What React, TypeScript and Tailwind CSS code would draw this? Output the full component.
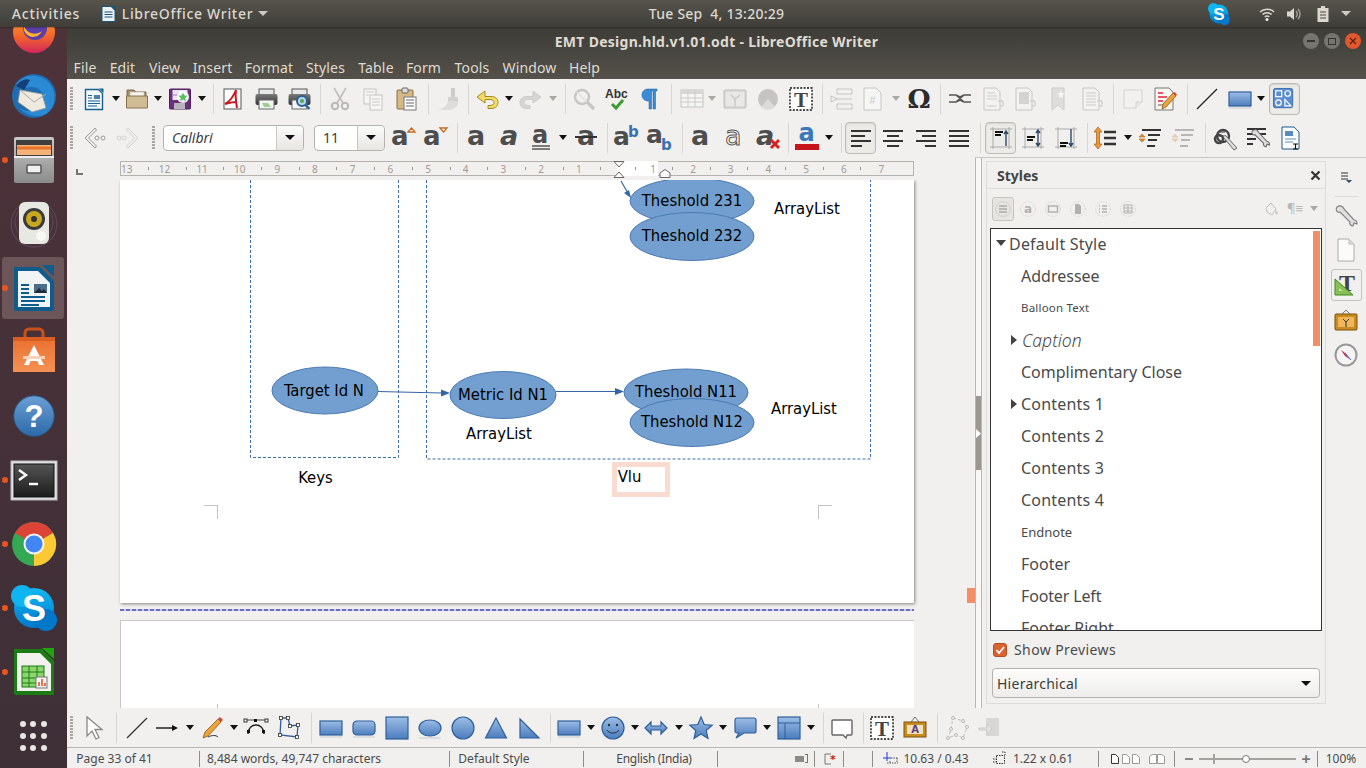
import React from "react";

type SP = { w?: number; h?: number; vb?: string; children?: React.ReactNode; className?: string };
const S = ({ w = 24, h = 24, vb = "0 0 24 24", children, className }: SP) => (
  <svg width={w} height={h} viewBox={vb} className={"overflow-visible " + (className || "")}>{children}</svg>
);

type Item = { x: number; n: React.ReactNode; w: number };
const it = (x: number, n: React.ReactNode, w = 28): Item => ({ x, n, w });
const tx = (left: number, width: number, n: React.ReactNode): Item => ({ x: left + width / 2, n, w: width });

function Bar({ items, origin = 67, className }: { items: Item[]; origin?: number; className?: string }) {
  let c = origin;
  return (
    <div className={"flex items-center " + (className || "")}>
      {items.map((i, k) => {
        const l = i.x - i.w / 2;
        const m = l - c;
        c = l + i.w;
        return (
          <div key={k} style={{ marginLeft: m, width: i.w }} className="shrink-0 flex items-center justify-center whitespace-pre">
            {i.n}
          </div>
        );
      })}
    </div>
  );
}

const Dd = ({ off }: { off?: boolean }) => (
  <S w={8} h={5} vb="0 0 8 5"><path d="M0 0h8L4 5z" fill={off ? "#aaa8a3" : "#111"} /></S>
);
const Sep = () => <div className="w-px h-[30px] bg-[#d8d6d2]" />;
const Grip = () => <div className="w-[3px] h-[24px] bg-[repeating-linear-gradient(#a8a6a1_0_2px,transparent_2px_3px)]" />;

const Defs = () => (
  <svg width="0" height="0" className="absolute">
    <defs>
      <linearGradient id="bl" x1="0" y1="0" x2="0" y2="1"><stop offset="0" stopColor="#9dbde6" /><stop offset="1" stopColor="#4c7dbd" /></linearGradient>
      <linearGradient id="gy" x1="0" y1="0" x2="0" y2="1"><stop offset="0" stopColor="#7b7b7b" /><stop offset="1" stopColor="#333" /></linearGradient>
      <linearGradient id="ff" x1="0" y1="0" x2="0" y2="1"><stop offset="0" stopColor="#ffb32c" /><stop offset="0.6" stopColor="#f4662a" /><stop offset="1" stopColor="#d2265f" /></linearGradient>
      <linearGradient id="bag" x1="0" y1="0" x2="0" y2="1"><stop offset="0" stopColor="#e96f2e" /><stop offset="1" stopColor="#f49155" /></linearGradient>
      <linearGradient id="sky" x1="0" y1="0" x2="0" y2="1"><stop offset="0" stopColor="#12b8f3" /><stop offset="1" stopColor="#0078ca" /></linearGradient>
      <linearGradient id="hp" x1="0" y1="0" x2="0" y2="1"><stop offset="0" stopColor="#6a9fd4" /><stop offset="1" stopColor="#2d6aa8" /></linearGradient>
      <linearGradient id="cab" x1="0" y1="0" x2="0" y2="1"><stop offset="0" stopColor="#c9c9c9" /><stop offset="1" stopColor="#8b8b8b" /></linearGradient>
      <linearGradient id="term" x1="0" y1="0" x2="0" y2="1"><stop offset="0" stopColor="#555" /><stop offset="1" stopColor="#1b1b1b" /></linearGradient>
    </defs>
  </svg>
);

/* ---------- toolbar icons ---------- */
const WriterDoc = () => (
  <S>
    <path d="M3.5 2.5h13l4 4v16h-17z" fill="#f5f8fb" stroke="#18608f" strokeWidth="1.4" />
    <path d="M17 1.5h4.5V6z" fill="#18608f" />
    <rect x="12" y="8" width="6" height="4" fill="#4f7fae" />
    <path d="M6 8.5h4M6 11h4M6 14h12M6 16.5h12M6 19h9" stroke="#18608f" strokeWidth="1.2" />
  </S>
);
const Open = () => (
  <S>
    <path d="M2 3h7l2 2h10v5H2z" fill="#a8946c" stroke="#7f6b48" />
    <rect x="5" y="5" width="14" height="7" fill="#f7f5ee" stroke="#b8b2a2" strokeWidth=".6" />
    <path d="M1.5 9h21v12h-21z" fill="#cfbb94" stroke="#8a7450" />
  </S>
);
const Save = () => (
  <S>
    <rect x="1.5" y="2" width="21" height="20" rx="1" fill="#6b2f7e" stroke="#4d1f5c" />
    <rect x="4.5" y="3" width="15" height="10" fill="#e8e6ee" />
    <path d="M4 8h15" stroke="#a07ab0" />
    <rect x="6" y="16" width="11" height="6" fill="#b9b5bd" />
    <circle cx="15" cy="10" r="6" fill="#fff" opacity=".9" />
    <path d="M15 5.5l1.4 3 3.2.3-2.4 2.1.8 3.2-3-1.7-3 1.7.8-3.2-2.4-2.1 3.2-.3z" fill="#55c05a" />
  </S>
);
const Pdf = () => (
  <S>
    <rect x="3" y="2" width="17" height="20" fill="#fff" stroke="#555" />
    <path d="M15 3c-2 5-5 11-11 14 4-1 7-2 11-2M15 3c-1 6 0 12 1 18" fill="none" stroke="#c8191c" strokeWidth="2" />
  </S>
);
const Printer = ({ mag }: { mag?: boolean }) => (
  <S>
    <rect x="5" y="2" width="15" height="6" fill="#e8e8e8" stroke="#555" />
    <rect x="1.5" y="7" width="22" height="11" rx="2" fill="url(#gy)" />
    <rect x="5" y="13" width="15" height="9" fill="#f4f4f4" stroke="#666" />
    {!mag && <path d="M8 16h6l3 4H10z" fill="#9ccf8f" />}
    {mag && <><circle cx="15" cy="14" r="5" fill="#b9d5ea" stroke="#2c5f93" strokeWidth="2" /><path d="M18.5 18l4 4" stroke="#2c5f93" strokeWidth="2.4" /><circle cx="15" cy="14" r="2" fill="#5aa060" /></>}
  </S>
);
const Cut = () => (
  <S className="opacity-40">
    <path d="M6 1l9 15M18 1L9 16" stroke="#777" strokeWidth="1.6" />
    <circle cx="7" cy="19" r="3.2" fill="none" stroke="#666" strokeWidth="2" />
    <circle cx="17" cy="19" r="3.2" fill="none" stroke="#666" strokeWidth="2" />
  </S>
);
const Copy = () => (
  <S className="opacity-35">
    <rect x="3" y="2" width="12" height="15" fill="#fff" stroke="#777" />
    <rect x="9" y="8" width="12" height="15" fill="#fff" stroke="#777" />
    <path d="M5 5h8M5 8h3M11 12h8M11 15h8M11 18h8" stroke="#888" />
  </S>
);
const Paste = () => (
  <S>
    <rect x="3" y="3" width="16" height="19" rx="1" fill="#d6b887" stroke="#8a6f42" />
    <rect x="8" y="1" width="6" height="5" rx="1" fill="#ddd" stroke="#666" />
    <rect x="10" y="10" width="12" height="13" fill="#fff" stroke="#777" />
    <path d="M12 13h8M12 16h8M12 19h8" stroke="#666" />
  </S>
);
const Brush = () => (
  <S className="opacity-35">
    <rect x="15" y="1" width="4" height="9" rx="1" fill="#888" />
    <path d="M12 10h10v4H12z" fill="#999" />
    <path d="M12 14h10c1 4-2 8-9 9-3 0-9 0-11-1 5 0 9-3 10-8z" fill="#bbb" />
  </S>
);
const Undo = ({ off }: { off?: boolean }) => (
  <S className={off ? "opacity-30 -scale-x-100" : ""}>
    <path d="M10 4L2 10l8 6v-3.5h5c3 0 4 1.5 4 3s-1 3-4 3h-2v3h3c5 0 7-3 7-6s-2-6-7-6h-6z" fill={off ? "#999" : "#f4dc6b"} stroke={off ? "#777" : "#a38a1d"} strokeWidth="1" />
  </S>
);
const Find = () => (
  <S className="opacity-40">
    <circle cx="10" cy="10" r="7" fill="none" stroke="#888" strokeWidth="2.4" />
    <path d="M15 15l7 7" stroke="#888" strokeWidth="3.4" />
    <path d="M5 5l10 10" stroke="#ccc" strokeWidth="1.5" />
  </S>
);
const Spell = () => (
  <S w={26} h={26} vb="0 0 26 26">
    <text x="1" y="12" fontSize="12" fontWeight="700" fill="#333" fontFamily="Liberation Sans">Abc</text>
    <path d="M8 18l4 4 7-8" fill="none" stroke="#3f9c35" strokeWidth="3" />
  </S>
);
const Pilcrow = () => (
  <S>
    <path d="M19 2H10C6.500 2 4 4.500 4 8s2.500 6 6 6h1v8h2.500V4h1.500v18h2.500V4H19z" fill="#3b8ad6" stroke="#1a5c96" strokeWidth=".5" />
  </S>
);
const TableI = () => (
  <S className="opacity-35">
    <rect x="1" y="3" width="22" height="17" fill="#fff" stroke="#777" />
    <rect x="1" y="3" width="22" height="4" fill="#aaa" />
    <path d="M1 11h22M1 15h22M8 3v17M15 3v17" stroke="#888" />
  </S>
);
const Img = () => (
  <S className="opacity-40">
    <rect x="1" y="3" width="22" height="18" rx="1" fill="#bbb" stroke="#777" />
    <rect x="3" y="5" width="18" height="14" fill="#ddd" />
    <path d="M12 19v-7l-4-4M12 12l5-4" stroke="#888" strokeWidth="1.4" fill="none" />
  </S>
);
const Chart = () => (
  <S className="opacity-50">
    <circle cx="12" cy="12" r="10" fill="#999" />
    <path d="M12 12L5 20a10 10 0 0 0 14 0z" fill="#c8c8c8" />
  </S>
);
const TBox = ({ size = 24 }: { size?: number }) => (
  <S w={size} h={size}>
    <rect x="1" y="1" width="22" height="22" fill="#fff" stroke="#111" strokeWidth="1.4" strokeDasharray="2 1.4" />
    <text x="12" y="19.500" textAnchor="middle" fontSize="21" fontWeight="700" fill="#444" fontFamily="Liberation Serif">T</text>
  </S>
);
const Header1 = () => (
  <S className="opacity-35">
    <path d="M7 2h15v5H7zM7 17h15v5H7zM1 9l6 3-6 3zM7 12h15" fill="none" stroke="#777" />
  </S>
);
const Field = () => (
  <S className="opacity-40">
    <path d="M3 1h12l5 5v17H3z" fill="#fff" stroke="#888" />
    <text x="11.500" y="17" textAnchor="middle" fontSize="11" fill="#888" fontFamily="Liberation Sans">#</text>
  </S>
);
const Omega = () => (
  <span className="font-['DejaVu_Serif'] font-bold text-[26px] leading-none text-[#2b2b2b]">Ω</span>
);
const LinkI = () => (
  <S><path d="M1 8h7l4 2 4-2h7M1 15h7l4-2 4 2h7M8 8l8 7M16 8l-8 7" fill="none" stroke="#555" strokeWidth="1.6" /></S>
);
const Pg = ({ kind }: { kind: number }) => (
  <S className="opacity-40">
    <path d="M3 1h12l4 4v18H3z" fill="#f5f5f5" stroke="#888" />
    {kind === 0 && <path d="M6 6h8M6 9h10M6 12h10M6 19h10" stroke="#999" />}
    {kind === 1 && <rect x="6" y="5" width="10" height="12" fill="#aaa" />}
    {kind === 2 && <path d="M6 6h10M6 9h10M6 12h10M6 15h10M6 18h10" stroke="#999" />}
    <path d="M17 14h5v5h-3" fill="none" stroke="#888" />
  </S>
);
const Bookmark = () => (
  <S className="opacity-35"><path d="M6 1h12v22l-6-5-6 5z" fill="#bbb" stroke="#888" /><path d="M15 3l1 3 3 .3-2.300 2 .7 3-2.400-1.500-2.500 1.500.7-3L11 6.300 14 6z" fill="#fff" /></S>
);
const Note = () => (
  <S className="opacity-40"><path d="M3 3h18v12l-6 6H3z" fill="#f4f4f4" stroke="#aaa" /><path d="M15 21v-6h6" fill="#ddd" stroke="#aaa" /></S>
);
const Track = () => (
  <S>
    <path d="M2 1h14l4 4v18H2z" fill="#f7f5f0" stroke="#777" />
    <path d="M5 6h5M5 10h9M5 14h5" stroke="#d24" strokeWidth="1.4" />
    <path d="M5 18h5" stroke="#888" strokeWidth="1.4" />
    <path d="M9 22l1-5L20 6l3 3-10 11z" fill="#eda23c" stroke="#8a5a12" strokeWidth=".8" />
    <path d="M20 6l3 3 1-1.500-2.500-2.500z" fill="#d2453f" />
  </S>
);
const LineI = ({ c = "#222" }: { c?: string }) => <S><path d="M2 22L22 2" stroke={c} strokeWidth="1.2" /></S>;
const RectI = ({ shadow = true }: { shadow?: boolean }) => (
  <S>
    {shadow && <rect x="1" y="20" width="22" height="2" fill="#ddd" />}
    <rect x="1" y="5" width="22" height="14" fill="url(#bl)" stroke="#2f5f9b" strokeWidth="1.2" />
  </S>
);
const ShapesI = () => (
  <S w={22} h={22}>
    <rect x=".5" y=".5" width="21" height="21" rx="2" fill="#5b8ed0" stroke="#3a6aa8" />
    <rect x="3" y="3" width="6.500" height="6.500" fill="none" stroke="#fff" strokeWidth="1.300" />
    <circle cx="16" cy="6" r="3" fill="none" stroke="#fff" strokeWidth="1.300" />
    <circle cx="6" cy="16" r="3" fill="none" stroke="#fff" strokeWidth="1.300" />
    <path d="M13 19.500h6.500l-6.500-7z" fill="none" stroke="#fff" strokeWidth="1.300" />
  </S>
);
const Lines = ({ kind, c = "#333" }: { kind: "l" | "c" | "r" | "j"; c?: string }) => {
  const d = {
    l: "M2 5h20M2 10h14M2 15h20M2 20h11",
    c: "M2 5h20M6 10h12M2 15h20M6 20h12",
    r: "M2 5h20M8 10h14M2 15h20M11 20h11",
    j: "M2 5h20M2 10h20M2 15h20M2 20h20",
  }[kind];
  return <S><path d={d} stroke={c} strokeWidth="2.200" /></S>;
};
const VAlign = ({ k }: { k: 0 | 1 | 2 }) => {
  const y = [7, 12, 18][k];
  return (
    <S>
      <path d="M4 1v22M20 1v22M1 3h22M1 21h22" stroke="#aaa" strokeWidth="1" />
      <path d={`M6 ${y - 1}h8M6 ${y + 2}h6`} stroke="#111" strokeWidth="2" />
      <path d={k === 0 ? "M17 20V6M15 8l2-3 2 3" : k === 1 ? "M17 5v14M15 7l2-3 2 3M15 17l2 3 2-3" : "M17 3v17M15 17l2 3 2-3"} fill="none" stroke="#2c4a6b" strokeWidth="1.400" />
    </S>
  );
};
const LineSpace = () => (
  <S>
    <path d="M5 1l4 5H6.500v12H9l-4 5-4-5h2.500V6H1z" fill="#e9973f" stroke="#b06a1a" strokeWidth=".8" />
    <path d="M11 6h12M11 12h12M11 18h12" stroke="#333" strokeWidth="2.400" />
  </S>
);
const ParaSpace = ({ off }: { off?: boolean }) => (
  <S className={off ? "opacity-30" : ""}>
    <path d="M4 4h19M9 20h8M1 22h0" stroke="#333" strokeWidth="2.200" />
    <path d="M4 8l3 3H1zM4 16l3-3H1z" fill="#e0883a" stroke="#b06a1a" strokeWidth=".6" />
    <path d="M10 9h12M10 14h9" stroke="#333" strokeWidth="1.800" />
  </S>
);
const Wrench = ({ c = "#555" }: { c?: string }) => (
  <path d="M3 3c3-2 6-1 7 2l10 11c2 0 3 2 3 4l-3-1-1 3c-2 0-4-2-3-4L6 8C3 9 1 6 3 3z" fill="#ddd" stroke={c} strokeWidth="1.200" />
);
const FindRep = () => (
  <S>
    <path d="M4 6h7M4 10h7" stroke="#333" />
    <circle cx="9" cy="10" r="6" fill="none" stroke="#444" strokeWidth="2.400" />
    <circle cx="5" cy="13" r="4" fill="none" stroke="#444" strokeWidth="2.400" />
    <path d="M11 9l12 13-3 2-10-12" fill="#ddd" stroke="#666" />
  </S>
);
const ListWrench = () => (
  <S>
    <path d="M1 3h19M1 8h19M1 13h9M1 18h6" stroke="#333" strokeWidth="2.200" />
    <g transform="translate(4 2) scale(.85)"><Wrench c="#666" /></g>
  </S>
);
const PageEdit = () => (
  <S>
    <path d="M3 1h12l5 5v17H3z" fill="#fff" stroke="#1d5d8d" />
    <rect x="6" y="5" width="8" height="5" fill="#5a8ac0" />
    <path d="M6 13h11M6 16h8" stroke="#5a8ac0" />
    <path d="M14 18h5M16.500 18v5M14 23h5" stroke="#111" strokeWidth="1.200" />
  </S>
);
const A = ({ s = 27, c = "#4d4d4d", italic, x = 5, y = 20, extra, stroke }: { s?: number; c?: string; italic?: boolean; x?: number; y?: number; extra?: React.ReactNode; stroke?: boolean }) => (
  <S w={28} h={26} vb="0 0 28 26">
    <text x={x} y={y} fontSize={s} fontWeight={stroke ? "400" : "700"} fontStyle={italic ? "italic" : "normal"} fontFamily="DejaVu Sans" fill={stroke ? "#fff" : c} stroke={stroke ? "#555" : "none"} strokeWidth={stroke ? 1 : 0}>a</text>
    {extra}
  </S>
);
const PrevNav = ({ off }: { off?: boolean }) => (
  <S className={off ? "opacity-25" : "opacity-70"}>
    {off ? (
      <path d="M12 2l10 10-10 10-1.500-2 8-8-8-8z" fill="#eee" stroke="#777" />
    ) : (
      <path d="M12 2L2 12l10 10 1.500-2-8-8 8-8z" fill="#eee" stroke="#777" />
    )}
    <circle cx={off ? 3 : 14} cy="12" r="2" fill="none" stroke="#777" />
    <circle cx={off ? 8 : 20} cy="12" r="2" fill="none" stroke="#777" />
  </S>
);
const Active = ({ children }: { children: React.ReactNode }) => (
  <div className="w-[31px] h-[32px] shrink-0 flex items-center justify-center rounded-[4px] border border-[#bdbbb6] bg-[#ecebe8] shadow-[inset_0_1px_2px_rgba(0,0,0,0.1)]">{children}</div>
);
const Combo = ({ label, w, italic, tw }: { label: string; w: string; italic?: boolean; tw: string }) => (
  <div className={"h-[26px] rounded-[4px] border border-[#b4b2ad] bg-white flex items-stretch text-[14px] text-[#3c3c3c] shrink-0 " + w}>
    <div className={"flex-1 flex items-center pl-2 " + (italic ? "italic" : "")}>{label}</div>
    <div className={"border-l border-[#c9c7c2] bg-gradient-to-b from-[#fbfbfa] to-[#e7e6e3] rounded-r-[4px] flex items-center justify-center " + tw}>
      <S w={10} h={5} vb="0 0 10 5"><path d="M0 0h10L5 5z" fill="#111" /></S>
    </div>
  </div>
);

/* ---------- draw toolbar shapes ---------- */
const Sh = ({ children }: { children: React.ReactNode }) => <S>{children}</S>;
const blue = { fill: "url(#bl)", stroke: "#2f5f9b", strokeWidth: 1.2 };

const row1: Item[] = [
  it(71, <Grip />, 3), it(94, <WriterDoc />), it(116, <Dd />, 8), it(137, <Open />), it(158, <Dd />, 8),
  it(180, <Save />), it(202, <Dd />, 8), it(213, <Sep />, 1), it(233, <Pdf />), it(266, <Printer />), it(299, <Printer mag />),
  it(320, <Sep />, 1), it(340, <Cut />), it(373, <Copy />), it(406, <Paste />), it(428, <Sep />, 1), it(448, <Brush />),
  it(468, <Sep />, 1), it(487, <Undo />), it(509, <Dd />, 8), it(531, <Undo off />), it(553, <Dd off />, 8), it(565, <Sep />, 1),
  it(584, <Find />), it(617, <Spell />), it(650, <Pilcrow />), it(671, <Sep />, 1), it(692, <TableI />), it(712, <Dd off />, 8),
  it(735, <Img />), it(768, <Chart />), it(801, <TBox />), it(822, <Sep />, 1), it(842, <Header1 />), it(873, <Field />),
  it(896, <Dd off />, 8), it(919, <Omega />), it(940, <Sep />, 1), it(960, <LinkI />), it(993, <Pg kind={0} />), it(1025, <Pg kind={1} />),
  it(1058, <Bookmark />), it(1092, <Pg kind={2} />), it(1113, <Sep />, 1), it(1133, <Note />), it(1165, <Track />), it(1187, <Sep />, 1),
  it(1207, <LineI />), it(1240, <RectI />), it(1261, <Dd />, 8), it(1284, <Active><ShapesI /></Active>, 31),
];

const row2: Item[] = [
  it(71, <Grip />, 3), it(95, <PrevNav />), it(128, <PrevNav off />), it(153, <Grip />, 3),
  it(233.5, <Combo label="Calibri" italic w="w-[141px]" tw="w-[27px]" />, 141),
  it(349.5, <Combo label="11" w="w-[71px]" tw="w-[27px]" />, 71),
  it(402, <A x={3} s={26} extra={<path d="M20 7l3.500-4 3.500 4z" fill="#fff" stroke="#c66a1c" strokeWidth="1.300" />} />),
  it(434, <A x={3} s={26} extra={<path d="M20 3l3.500 4 3.500-4z" fill="#fff" stroke="#c66a1c" strokeWidth="1.300" />} />),
  it(457, <Sep />, 1),
  it(476, <A />), it(509, <A italic />),
  it(541, <A s={24} y={18} extra={<path d="M5 21h18M5 24h18" stroke="#555" strokeWidth="1.400" />} />), it(563, <Dd />, 8),
  it(586, <A extra={<path d="M3 12h22" stroke="#333" strokeWidth="2" />} />), it(607, <Sep />, 1),
  it(626, <A x={1} s={25} y={20} extra={<text x="16" y="12" fontSize="15" fontWeight="700" fontFamily="DejaVu Sans" fill="#3a6fb0">b</text>} />),
  it(659, <A x={1} s={25} y={18} extra={<text x="16" y="25" fontSize="15" fontWeight="700" fontFamily="DejaVu Sans" fill="#3a6fb0">b</text>} />),
  it(682, <Sep />, 1),
  it(700, <A />), it(734, <A stroke />),
  it(768, <A x={2} italic extra={<path d="M17 15l8 8M25 15l-8 8" stroke="#d8201f" strokeWidth="3" />} />),
  it(788, <Sep />, 1),
  it(807, <S w={24} h={26} vb="0 0 24 26"><text x="3.500" y="16" fontSize="24" fontWeight="700" fontFamily="DejaVu Sans" fill="#3a78bd">a</text><rect y="19" width="24" height="6" fill="#c7141a" /></S>, 24),
  it(829, <Dd />, 8), it(841, <Sep />, 1),
  it(860.5, <Active><Lines kind="l" /></Active>, 31), it(893, <Lines kind="c" />), it(926, <Lines kind="r" />), it(959, <Lines kind="j" />),
  it(980, <Sep />, 1),
  it(1000.5, <Active><VAlign k={0} /></Active>, 31), it(1033, <VAlign k={1} />), it(1066, <VAlign k={2} />),
  it(1087, <Sep />, 1), it(1105, <LineSpace />), it(1128, <Dd />, 8), it(1150, <ParaSpace />), it(1183, <ParaSpace off />), it(1205, <Sep />, 1),
  it(1226, <FindRep />), it(1258, <ListWrench />), it(1291, <PageEdit />),
];

const row3: Item[] = [
  it(71, <Grip />, 3),
  it(95, <S><path d="M4 1v19l5-5 4 8 3-1.500-4-8h7z" fill="#fff" stroke="#888" strokeWidth="1.300" /></S>),
  it(116, <Sep />, 1),
  it(137, <LineI c="#333" />),
  it(167, <S><path d="M1 12h17" stroke="#111" strokeWidth="1.400" /><path d="M17 9l6 3-6 3z" fill="#111" /></S>), it(190, <Dd />, 8),
  it(212, <S><path d="M3 22l2-6L18 3l3 3L8 20z" fill="#eda23c" stroke="#8a5a12" strokeWidth=".8" /><path d="M18 3l3 3 2-2-3-3z" fill="#d2453f" /><path d="M8 21c4-2 8-2 10 0" stroke="#333" fill="none" /></S>), it(234, <Dd />, 8),
  it(256, <S><path d="M4 18C4 6 20 6 20 18" fill="none" stroke="#222" strokeWidth="1.400" /><path d="M1 4h22" stroke="#444" /><rect x="0" y="3" width="3" height="3" fill="#fff" stroke="#333" /><rect x="21" y="3" width="3" height="3" fill="#fff" stroke="#333" /><rect x="10" y="3" width="3" height="3" fill="#111" /><rect x="3" y="14" width="3" height="3" fill="#111" /><rect x="18" y="14" width="3" height="3" fill="#111" /></S>),
  it(289, <S><path d="M4 2h7l2 8 8-1-1 12-17-2z" fill="none" stroke="#2f5f9b" strokeWidth="1.300" />{[[4, 2], [11, 2], [13, 10], [21, 9], [20, 21], [3, 19]].map(([x, y], i) => <rect key={i} x={x - 1.5} y={y - 1.5} width="3" height="3" fill="#fff" stroke="#333" strokeWidth=".8" />)}</S>),
  it(311, <Sep />, 1),
  it(331, <RectI />),
  it(364, <Sh><rect x="1" y="20" width="22" height="2" fill="#ddd" /><rect x="1" y="5" width="22" height="14" rx="4" {...blue} /></Sh>),
  it(397, <Sh><rect x="1" y="1" width="22" height="22" {...blue} /></Sh>),
  it(430, <Sh><rect x="1" y="21" width="22" height="2" fill="#ddd" /><ellipse cx="12" cy="12" rx="11" ry="8" {...blue} /></Sh>),
  it(463, <Sh><circle cx="12" cy="12" r="11" {...blue} /></Sh>),
  it(496, <Sh><path d="M12 2l10.500 20h-21z" {...blue} /></Sh>),
  it(529, <Sh><path d="M3 3l19 19H3z" {...blue} /></Sh>),
  it(550, <Sep />, 1),
  it(569, <RectI />), it(591, <Dd />, 8),
  it(613, <Sh><circle cx="12" cy="12" r="11" {...blue} /><circle cx="8" cy="9" r="1.200" fill="#234" /><circle cx="16" cy="9" r="1.200" fill="#234" /><path d="M6 14c2 4 10 4 12 0" fill="none" stroke="#234" /></Sh>), it(635, <Dd />, 8),
  it(656, <Sh><path d="M1 12l6-6v4h10V6l6 6-6 6v-4H7v4z" {...blue} /></Sh>), it(679, <Dd />, 8),
  it(701, <Sh><path d="M12 1l3.200 7.500 8 .7-6 5.300 1.800 8L12 18l-7 4.500 1.800-8-6-5.300 8-.7z" {...blue} /></Sh>), it(723, <Dd />, 8),
  it(745, <Sh><path d="M4 2h17a2 2 0 0 1 2 2v11a2 2 0 0 1-2 2H11l-8 5 3-5H4a2 2 0 0 1-2-2V4a2 2 0 0 1 2-2z" {...blue} /></Sh>), it(767, <Dd />, 8),
  it(789, <Sh><rect x="1" y="1" width="22" height="22" {...blue} /><path d="M1 7h22M8 7v16" stroke="#2f5f9b" /></Sh>), it(811, <Dd />, 8),
  it(823, <Sep />, 1),
  it(842, <S><path d="M3 4h18a1 1 0 0 1 1 1v13a1 1 0 0 1-1 1h-4l-1 3-3-3H3a1 1 0 0 1-1-1V5a1 1 0 0 1 1-1z" fill="#fff" stroke="#666" strokeWidth="1.400" /></S>),
  it(863, <Sep />, 1),
  it(882, <TBox />),
  it(915, <S><path d="M12 1l-4 5M12 1l4 5" stroke="#777" fill="none" /><rect x="1" y="6" width="22" height="15" fill="#c98a1e" stroke="#7a5210" /><rect x="4" y="9" width="16" height="9" fill="#f2e2bc" /><text x="12" y="17" textAnchor="middle" fontSize="10" fontWeight="700" fill="#5a3b8a" fontFamily="DejaVu Sans">A</text></S>),
  it(937, <Sep />, 1),
  it(957, <S className="opacity-40"><path d="M8 2l10 3 4 6-4 11-7-3-8 3 3-9z" fill="none" stroke="#777" strokeDasharray="3 2" />{[[8, 2], [18, 5], [22, 11], [18, 22], [11, 19], [3, 22], [6, 13]].map(([x, y], i) => <circle key={i} cx={x} cy={y} r="1.500" fill="#fff" stroke="#666" />)}</S>),
  it(990, <S className="opacity-35"><path d="M8 2h13v18H8z" fill="#aaa" /><path d="M1 12h8V8l5 5-5 5v-4H1z" fill="#ccc" stroke="#888" /></S>),
];

/* ---------- dock ---------- */
const Dock48 = ({ children, s = 48 }: { children: React.ReactNode; s?: number }) => <S w={s} h={s} vb="0 0 48 48">{children}</S>;
const dock: { n: React.ReactNode; dot?: boolean; active?: boolean }[] = [
  { n: <Dock48><circle cx="24" cy="24" r="21" fill="url(#ff)" /><circle cx="25" cy="20" r="12" fill="#5b3ea8" /><path d="M14 18c3 8 12 10 18 5-3 6-9 7-13 5-4-2-6-6-5-10z" fill="#ffb32c" /></Dock48> },
  { n: <Dock48><circle cx="24" cy="24" r="22" fill="#1f6cb0" /><path d="M6 12C14 0 38 0 44 20c2 10-2 18-8 22-8 4-20 2-26-6 10 6 22 4 24-8 1-8-8-16-18-12z" fill="#2a8ad4" /><path d="M10 18l22 4 4 14-14 4L8 30z" fill="#efeae0" stroke="#999" strokeWidth=".8" /><path d="M10 18l14 12 12-8" fill="none" stroke="#aaa" /><path d="M6 14c4-6 10-8 14-6l-6 10z" fill="#123f7a" /></Dock48> },
  { n: <Dock48><rect x="4" y="1" width="40" height="46" rx="2" fill="url(#cab)" /><rect x="6" y="4" width="36" height="18" fill="#3e3e3e" /><rect x="7" y="9" width="34" height="10" fill="#f5b37a" /><path d="M7 12h34" stroke="#e8742c" strokeWidth="3" /><path d="M4 20h40v2H4z" fill="#eee" /><rect x="17" y="29" width="14" height="8" rx="1" fill="#f0f0f0" stroke="#555" strokeWidth="1.500" /></Dock48>, dot: true },
  { n: <Dock48><circle cx="24" cy="24" r="23" fill="none" stroke="#6f5d75" strokeWidth="1" opacity=".6" /><circle cx="24" cy="22" r="19" fill="none" stroke="#6f5d75" strokeWidth="1" opacity=".5" /><rect x="9" y="2" width="30" height="42" rx="6" fill="#e8e8e2" /><circle cx="24" cy="19" r="11" fill="#3a3a3a" /><circle cx="24" cy="19" r="8" fill="#c9a81f" /><circle cx="24" cy="19" r="3" fill="#333" /><circle cx="31" cy="36" r="5" fill="#f8f8f4" /></Dock48> },
  { n: <Dock48><path d="M4 3h26l14 14v28a2 2 0 0 1-2 2H6a2 2 0 0 1-2-2z" fill="#0e5b8c" /><path d="M8 7h20l12 12v24H8z" fill="#f1f4f6" /><path d="M32 1h12v12z" fill="#0e5b8c" /><rect x="24" y="20" width="13" height="9" fill="#4c6c88" /><path d="M24 29l5-5 3 3 2-2 3 4z" fill="#1e2b36" /><path d="M11 21h8M11 25h8M11 29h8M11 33h24M11 37h24M11 41h18" stroke="#0e5b8c" strokeWidth="2" /></Dock48>, dot: true, active: true },
  { n: <Dock48><path d="M3 9h42v35H3z" fill="url(#bag)" /><path d="M3 9h42v4H3z" fill="#d85f1f" /><path d="M15 9V5a4 4 0 0 1 4-4h10a4 4 0 0 1 4 4v4" fill="none" stroke="#c9501a" strokeWidth="3" /><path d="M24 17l10 20h-5l-1.500-4h-7L19 37h-5z" fill="#fff" /><rect x="13" y="28" width="22" height="3" fill="#f9d2b8" /></Dock48> },
  { n: <Dock48 s={44}><circle cx="24" cy="24" r="22" fill="url(#hp)" stroke="#275d96" /><text x="24" y="36" textAnchor="middle" fontSize="34" fontWeight="700" fill="#fff" fontFamily="Liberation Sans">?</text></Dock48> },
  { n: <Dock48 s={48}><rect x="1" y="5" width="46" height="39" fill="#e0e0e0" stroke="#bbb" /><rect x="4" y="8" width="40" height="33" fill="url(#term)" stroke="#111" /><path d="M9 14l7 5-7 5" fill="none" stroke="#fff" strokeWidth="2.400" /><path d="M19 28h9" stroke="#fff" strokeWidth="2.400" /></Dock48>, dot: true },
  { n: <Dock48><circle cx="24" cy="24" r="22" fill="#34a853" /><path d="M4.900 13A22 22 0 0 1 43.100 13L24 24z" fill="#db4437" /><path d="M43.100 13A22 22 0 0 1 24 46L24 24z" fill="#fcc934" /><circle cx="24" cy="24" r="10.500" fill="#f1f3f4" /><circle cx="24" cy="24" r="8.500" fill="#4285f4" /></Dock48>, dot: true },
  { n: <Dock48><circle cx="24" cy="24" r="20" fill="url(#sky)" /><circle cx="12" cy="12" r="11" fill="#10b4f0" /><circle cx="36" cy="36" r="11" fill="#0078ca" /><text x="24" y="37" textAnchor="middle" fontSize="36" fontWeight="700" fill="#fff" fontFamily="Liberation Sans">S</text></Dock48>, dot: true },
  { n: <Dock48><path d="M4 1h28l12 12v32a2 2 0 0 1-2 2H6a2 2 0 0 1-2-2z" fill="#1a7c12" /><path d="M7 5h23l11 11v27H7z" fill="#f1f1ee" /><path d="M32 0h12v11z" fill="#1fa30f" /><rect x="12" y="18" width="22" height="21" fill="#8dd56f" stroke="#1a7c12" /><path d="M12 24h22M12 30h22M12 35h22M19 18v21M27 18v21" stroke="#1a7c12" /><rect x="26" y="29" width="11" height="11" fill="#f4f4f4" stroke="#777" /><path d="M29 38v-4M32 38v-7M35 38v-3" stroke="#e0562b" strokeWidth="1.600" /></Dock48>, dot: true },
];

const Dock = () => (
  <div className="w-[67px] shrink-0 h-full overflow-hidden bg-gradient-to-b from-[#4d3239] to-[#3e2f37] z-0">
    <div className="-mt-[26px] flex flex-col">
      {dock.map((d, i) => (
        <div key={i} className="relative h-[64px] flex items-center justify-center">
          {d.active && <div className="absolute left-[2px] top-[0px] w-[62px] h-[62px] rounded-[3px] bg-[#6c5659]" />}
          {d.dot && <div className="absolute left-[2px] top-[28px] w-[6px] h-[6px] rounded-full bg-[#e9541f]" />}
          <div className="relative -top-[1px]">{d.n}</div>
        </div>
      ))}
      <div className="h-[64px] grid grid-cols-3 gap-y-[6px] justify-items-center content-center px-[18px] pb-[2px]">
        {Array.from({ length: 9 }).map((_, i) => <div key={i} className="w-[6px] h-[6px] rounded-full bg-[#e9e7e4]" />)}
      </div>
    </div>
  </div>
);

/* ---------- top ---------- */
const TopBar = () => (
  <div className="h-[27px] shrink-0 bg-gradient-to-b from-[#57544d] to-[#3f3e39] text-[#dcd8cf] text-[14px] font-medium flex items-center relative z-10 shadow-[0_1px_1px_rgba(0,0,0,0.2)]">
    <Bar origin={0} className="w-full h-full" items={[
      tx(12, 68, <span className="tracking-[0.8px]">Activities</span>),
      it(108, <S w={15} h={16} vb="0 0 15 16"><path d="M1 .5h9l4 4v11H1z" fill="#eef2f5" stroke="#14567f" /><path d="M10 0h5v5z" fill="#14567f" /><path d="M3.500 6h8M3.500 8.500h8M3.500 11h8" stroke="#14567f" /></S>, 15),
      tx(122, 131, <span className="tracking-[0.7px]">LibreOffice Writer</span>),
      it(263, <S w={10} h={5} vb="0 0 10 5"><path d="M0 0h10L5 5z" fill="#cfcbc2" /></S>, 10),
      tx(648, 137, <span className="tracking-[0.25px]">Tue Sep  4, 13:20:29</span>),
      it(1218.5, <S w={24} h={24}><circle cx="12" cy="12" r="9.500" fill="url(#sky)" /><circle cx="6.500" cy="6.500" r="5.500" fill="#10b4f0" /><circle cx="17.500" cy="17.500" r="5.500" fill="#0078ca" /><text x="12" y="18" textAnchor="middle" fontSize="17" fontWeight="700" fill="#fff" fontFamily="Liberation Sans">S</text></S>, 24),
      it(1267, <S w={16} h={16} vb="0 0 16 16"><path d="M1 6a10 10 0 0 1 14 0M3.500 8.500a6.500 6.500 0 0 1 9 0M5.800 11a3 3 0 0 1 4.400 0" fill="none" stroke="#dcd8cf" strokeWidth="1.500" /><circle cx="8" cy="13.500" r="1.500" fill="#f2f0ea" /></S>, 16),
      it(1294, <S w={16} h={16} vb="0 0 16 16"><path d="M1 5.500h3L8 2v12l-4-3.500H1z" fill="#dcd8cf" /><path d="M10 5a4 4 0 0 1 0 6M12 3a7 7 0 0 1 0 10" fill="none" stroke="#a8a59d" strokeWidth="1.300" /></S>, 16),
      it(1323, <S w={12} h={16} vb="0 0 12 16"><path d="M4 0h4v2h3.500v14H.5V2H4z" fill="#dcd8cf" /><path d="M3 6h6M3 9h6M3 12h6" stroke="#4a4842" strokeWidth="1.200" /></S>, 12),
      it(1346, <S w={10} h={5} vb="0 0 10 5"><path d="M0 0h10L5 5z" fill="#cfcbc2" /></S>, 10),
    ]} />
  </div>
);

const WinBtn = ({ c, children }: { c: string; children: React.ReactNode }) => (
  <div className={"w-[16px] h-[16px] rounded-full flex items-center justify-center " + c}>{children}</div>
);

const TitleArea = () => (
  <div className="h-[52px] shrink-0 bg-gradient-to-b from-[#3d3c37] to-[#54514a] flex flex-col text-[#dfdbd2]">
    <div className="h-[30px] shrink-0 flex items-center relative pb-[2px]">
      <div className="w-full text-center font-bold text-[14px] tracking-[0.28px]">EMT Design.hld.v1.01.odt - LibreOffice Writer</div>
      <div className="absolute right-[5px] top-[6px] flex gap-[5px] items-center">
        <WinBtn c="bg-[#76746e]"><div className="w-[8px] h-[2px] bg-[#35342f]" /></WinBtn>
        <WinBtn c="bg-[#76746e]"><div className="w-[8px] h-[7px] border border-[#35342f]" /></WinBtn>
        <WinBtn c="bg-[#e2572b]"><S w={8} h={8} vb="0 0 8 8"><path d="M1 1l6 6M7 1L1 7" stroke="#5a2210" strokeWidth="1.300" /></S></WinBtn>
      </div>
    </div>
    <Bar className="h-[20px] text-[14px] tracking-[0.15px]" items={[
      tx(73, 24, "File"), tx(109, 27, "Edit"), tx(148, 33, "View"), tx(193, 39, "Insert"), tx(244, 50, "Format"),
      tx(306, 39, "Styles"), tx(358, 36, "Table"), tx(406, 35, "Form"), tx(454, 36, "Tools"), tx(502, 55, "Window"), tx(569, 31, "Help"),
    ]} />
  </div>
);

/* ---------- ruler ---------- */
const leftNums = [13, 12, 11, 10, 9, 8, 7, 6, 5, 4, 3, 2, 1];
const rightNums = [2, 3, 4, 5, 6, 7];
const Ruler = () => (
  <div className="h-[23px] shrink-0 flex items-center">
    <div className="w-[53px] shrink-0 pl-[9px] pt-[6px]">
      <div className="w-[7px] h-[6px] border-l-2 border-b-2 border-[#77756f]" />
    </div>
    <div className="w-[794px] shrink-0 h-[15px] border border-[#b5b3ae] flex items-center text-[10px] leading-none text-[#a39a92] relative">
      <div className="w-[496px] shrink-0 flex justify-around pr-[6px]">
        {leftNums.map((n) => (
          <div key={n} className="flex items-center gap-[16px] w-[37.700px]">
            <span className="w-[11px] text-center">{n}</span>
            <span className="w-px h-[3px] bg-[#9a9894]" />
          </div>
        ))}
      </div>
      <div className="w-[41px] shrink-0 h-[15px] bg-white flex items-center justify-end pr-[2px]">
        <span className="w-px h-[3px] bg-[#9a9894] mr-[14px]" /><span>1</span>
      </div>
      <div className="flex-1 flex pl-[5px]">
        {rightNums.map((n) => (
          <div key={n} className="flex items-center gap-[16px] w-[37.700px] pl-[9px]">
            <span className="w-px h-[3px] bg-[#9a9894]" />
            <span className="w-[8px] text-center">{n}</span>
          </div>
        ))}
      </div>
      <div className="absolute left-[492px] -top-[1px] w-[12px] h-[16px]">
        <S w={12} h={17} vb="0 0 12 17"><path d="M1 .5h10L6 6zM1 16.500h10L6 11z" fill="#fff" stroke="#666" /></S>
      </div>
      <div className="absolute left-[538px] top-[7px] w-[12px] h-[9px]">
        <S w={12} h={9} vb="0 0 12 9"><path d="M1 8.500V4l5-3.500L11 4v4.500z" fill="#fff" stroke="#666" /></S>
      </div>
    </div>
  </div>
);

/* ---------- document ---------- */
const Diagram = () => (
  <svg width="794" height="423" viewBox="120 180 794 423" className="absolute left-0 top-0 font-['DejaVu_Sans_Condensed','DejaVu_Sans',sans-serif]">
    <path d="M250.500 175V457.500H398.500V175" fill="none" stroke="#3a6ea8" strokeWidth="1" strokeDasharray="3 2" />
    <path d="M426.500 175V459H870.500V175" fill="none" stroke="#3a6ea8" strokeWidth="1" strokeDasharray="3 2" />
    <ellipse cx="692" cy="201" rx="62" ry="23" fill="#729fcf" stroke="#4b7ab2" />
    <ellipse cx="692" cy="236.500" rx="62" ry="24" fill="#729fcf" stroke="#4b7ab2" />
    <path d="M621 181l8 14" stroke="#3465a4" strokeWidth="1.200" />
    <path d="M631 198l-7-5 5-3z" fill="#3465a4" />
    <ellipse cx="325" cy="390.500" rx="53" ry="23.500" fill="#729fcf" stroke="#4b7ab2" />
    <ellipse cx="503" cy="395" rx="53" ry="23.500" fill="#729fcf" stroke="#4b7ab2" />
    <ellipse cx="686" cy="392.500" rx="62" ry="23.500" fill="#729fcf" stroke="#4b7ab2" />
    <ellipse cx="692" cy="422.500" rx="62" ry="24" fill="#729fcf" stroke="#4b7ab2" />
    <path d="M378 391.500l64 1.500" stroke="#3465a4" strokeWidth="1.200" />
    <path d="M450 393l-9-3.500v7z" fill="#3465a4" />
    <path d="M556 391.500h60" stroke="#3465a4" strokeWidth="1.200" />
    <path d="M624 391.500l-9-3.500v7z" fill="#3465a4" />
    <g fontSize="16.500" fill="#000" textAnchor="middle" className="[font-stretch:condensed]">
      <text x="692" y="206">Theshold 231</text>
      <text x="692" y="241">Theshold 232</text>
      <text x="807" y="214">ArrayList</text>
      <text x="324" y="396">Target Id N</text>
      <text x="503" y="400">Metric Id N1</text>
      <text x="686" y="397">Theshold N11</text>
      <text x="692" y="427">Theshold N12</text>
      <text x="804" y="414">ArrayList</text>
      <text x="499" y="439">ArrayList</text>
      <text x="315.500" y="483">Keys</text>
      <text x="629.500" y="482">Vlu</text>
    </g>
  </svg>
);

const Doc = () => (
  <div className="flex-1 min-h-0 flex overflow-hidden">
    <div className="w-[53px] shrink-0" />
    <div className="w-[794px] shrink-0 flex flex-col">
      <div className="h-[423px] shrink-0 bg-white relative shadow-[1px_1px_3px_rgba(0,0,0,0.45)]">
        <Diagram />
        <div className="absolute left-[492px] top-[282px] w-[58px] h-[35px] border-[5px] border-[#f9dccf]" />
        <div className="absolute left-[84px] top-[325px] w-[14px] h-[14px] border-t border-r border-[#c4c4c4]" />
        <div className="absolute left-[698px] top-[325px] w-[14px] h-[14px] border-t border-l border-[#c4c4c4]" />
      </div>
      <div className="h-[2px] mt-[6px] shrink-0 bg-[repeating-linear-gradient(90deg,#6c6cc8_0_4px,#c8c8ea_4px_6px)]" />
      <div className="flex-1 mt-[9px] bg-white border-l border-t border-[#c9c7c3] relative">
        <div className="absolute left-[96px] bottom-0 w-px h-[4px] bg-[#c4c4c4]" />
        <div className="absolute left-[697px] bottom-0 w-px h-[4px] bg-[#c4c4c4]" />
      </div>
    </div>
    <div className="flex-1 flex flex-col items-end">
      <div className="h-[408px] shrink-0" />
      <div className="w-[8px] h-[15px] bg-[#f58e66]" />
    </div>
  </div>
);

/* ---------- sidebar ---------- */
const CircleI = ({ children, active }: { children: React.ReactNode; active?: boolean }) => (
  <S w={16} h={16} vb="0 0 16 16" className="opacity-45">
    <circle cx="8" cy="8" r="7.400" fill="none" stroke="#aaa" strokeWidth=".8" strokeDasharray={active ? undefined : "1.500 1"} />
    {children}
  </S>
);
const styleRows: { t: string; cls: string; arrow?: "d" | "r" }[] = [
  { t: "Default Style", cls: "pl-[18px] text-[16px] tracking-[0.2px]", arrow: "d" },
  { t: "Addressee", cls: "pl-[30px] text-[16px]" },
  { t: "Balloon Text", cls: "pl-[30px] text-[11.500px] tracking-[0.2px]" },
  { t: "Caption", cls: "pl-[31px] text-[17.500px] italic font-light", arrow: "r" },
  { t: "Complimentary Close", cls: "pl-[30px] text-[16px]" },
  { t: "Contents 1", cls: "pl-[30px] text-[16px] tracking-[0.2px]", arrow: "r" },
  { t: "Contents 2", cls: "pl-[30px] text-[16px] tracking-[0.2px]" },
  { t: "Contents 3", cls: "pl-[30px] text-[16px] tracking-[0.2px]" },
  { t: "Contents 4", cls: "pl-[30px] text-[16px] tracking-[0.2px]" },
  { t: "Endnote", cls: "pl-[30px] text-[13px] pt-[1px]" },
  { t: "Footer", cls: "pl-[30px] text-[16px]" },
  { t: "Footer Left", cls: "pl-[30px] text-[16px] -tracking-[0.15px]" },
  { t: "Footer Right", cls: "pl-[30px] text-[16px]" },
];

const Sidebar = () => (
  <div className="w-[391px] shrink-0 flex border-t border-[#c9c7c2]">
    <div className="w-[7px] shrink-0 border-l border-r border-[#b9b7b2] bg-[#f8f7f6] flex flex-col">
      <div className="h-[238px] shrink-0" />
      <div className="h-[74px] shrink-0 bg-[#9b9892] flex items-center justify-center">
        <S w={5} h={9} vb="0 0 5 9"><path d="M0 0l5 4.500L0 9z" fill="#fff" /></S>
      </div>
    </div>
    <div className="w-[4px] shrink-0" />
    <div className="w-[340px] shrink-0 mt-[3px] mb-[4px] border border-[#dedcd8] flex flex-col">
      <div className="h-[27px] shrink-0 flex items-center justify-between border-b border-[#dedcd8] pl-[10px] pr-[4px]">
        <span className="font-bold text-[14px] text-[#444]">Styles</span>
        <S w={11} h={11} vb="0 0 11 11"><path d="M1.500 1.500l8 8M9.500 1.500l-8 8" stroke="#333" strokeWidth="2.200" /></S>
      </div>
      <div className="h-[39px] shrink-0 flex items-center pl-[5px]">
        <div className="w-[22px] h-[24px] rounded-[3px] border border-[#c7c5c0] bg-[#e6e5e2] flex items-center justify-center">
          <CircleI active><path d="M4 5h8M4 8h8M4 11h8" stroke="#666" strokeWidth="1.500" /></CircleI>
        </div>
        <div className="w-[6px]" />
        <div className="flex gap-[9px]">
          <CircleI><text x="8" y="12" textAnchor="middle" fontSize="12" fontWeight="700" fill="#666" fontFamily="DejaVu Sans">a</text></CircleI>
          <CircleI><rect x="3.500" y="5" width="9" height="6" fill="none" stroke="#666" strokeWidth="1.500" /></CircleI>
          <CircleI><path d="M5 3h4l2 2v8H5z" fill="#666" /></CircleI>
          <CircleI><path d="M4 5h1M7 5h5M4 8h1M7 8h5M4 11h1M7 11h5" stroke="#666" strokeWidth="1.500" /></CircleI>
          <CircleI><path d="M4 4h8v8H4zM4 7h8M4 10h8M8 4v8" fill="none" stroke="#666" /></CircleI>
        </div>
        <div className="ml-[128px] flex items-center gap-[7px]">
          <S w={16} h={16} vb="0 0 16 16" className="opacity-35"><path d="M2 7l5-5 5 6-4 6-5-3z" fill="none" stroke="#666" /><path d="M12 9l2 3-1 2-2-2z" fill="#888" /></S>
          <span className="text-[13px] text-[#b9b7b3] leading-none">¶≡</span>
          <Dd off />
        </div>
      </div>
      <div className="mx-[3px] h-[403px] shrink-0 border border-[#333] bg-white overflow-hidden flex text-[#4a4a4a]">
        <div className="flex-1 min-w-0 -mt-px">
          {styleRows.map((r) => (
            <div key={r.t} className={"h-[32px] flex items-center relative " + r.cls}>
              {r.arrow === "d" && <S w={10} h={6} vb="0 0 10 6" className="absolute left-[5px] top-[12px]"><path d="M0 0h10L5 6z" fill="#444" /></S>}
              {r.arrow === "r" && <S w={6} h={10} vb="0 0 6 10" className="absolute left-[20px] top-[11px]"><path d="M0 0l6 5-6 5z" fill="#444" /></S>}
              {r.t}
            </div>
          ))}
        </div>
        <div className="w-[7px] shrink-0 mt-[2px] mr-[1px]">
          <div className="h-[115px] bg-[#f28e67]" />
        </div>
      </div>
      <div className="h-[37px] shrink-0 flex items-center pl-[6px] gap-[7px] text-[14px] text-[#4a4a4a] tracking-[0.4px]">
        <div className="w-[14px] h-[14px] rounded-[3px] bg-[#d9622f] border border-[#b54d20] flex items-center justify-center">
          <S w={10} h={10} vb="0 0 10 10"><path d="M1.500 5l2.500 3 5-6" fill="none" stroke="#fff" strokeWidth="1.800" /></S>
        </div>
        Show Previews
      </div>
      <div className="mx-[5px] h-[30px] shrink-0 rounded-[4px] border border-[#b4b2ad] bg-gradient-to-b from-[#fdfdfc] to-[#eeedeb] flex items-center justify-between pl-[4px] pr-[8px] text-[14px] text-[#3c3c3c] tracking-[0.25px]">
        Hierarchical
        <S w={10} h={5} vb="0 0 10 5"><path d="M0 0h10L5 5z" fill="#111" /></S>
      </div>
    </div>
    <div className="w-[40px] shrink-0 flex flex-col items-center">
      <div className="h-[38px] flex items-center justify-center mt-[1px] border-b border-[#dedcd8] w-[24px] shrink-0">
        <S w={11} h={11} vb="0 0 11 11"><path d="M0 1h7M0 4h7M0 7h7" stroke="#333" /><path d="M5 8h6l-3 3z" fill="#2c4a6b" /></S>
      </div>
      <div className="h-[37px] flex items-center justify-center shrink-0 pt-[1px]"><S className="opacity-80"><Wrench c="#666" /></S></div>
      <div className="h-[31px] flex items-center justify-center shrink-0">
        <S><path d="M4 1h11l5 5v17H4z" fill="#fbfbfa" stroke="#aaa" /><path d="M15 1v5h5" fill="#ddd" stroke="#bbb" /></S>
      </div>
      <div className="w-[31px] h-[32px] shrink-0 mt-[4px] rounded-[3px] border border-[#c5c3be] flex items-center justify-center">
        <S w={26} h={26} vb="0 0 26 26">
          <text x="14" y="19" textAnchor="middle" fontSize="24" fontWeight="700" fill="#444" fontFamily="Liberation Serif">T</text>
          <path d="M2 7l0 16h18z" fill="#88c057" stroke="#3f8a1a" />
          <path d="M6 16v3h4z" fill="#c4e0a8" />
        </S>
      </div>
      <div className="h-[36px] flex items-center justify-center shrink-0 pt-[3px]">
        <S><path d="M12 1L8 5M12 1l4 4" stroke="#777" fill="none" /><rect x="1" y="5" width="22" height="16" rx="1" fill="#c98a1e" stroke="#7a5210" /><rect x="4" y="8" width="16" height="10" fill="#f0b65a" /><path d="M12 18v-6M12 13l-3-3M12 13l3-3" stroke="#333" /></S>
      </div>
      <div className="h-[36px] flex items-center justify-center shrink-0">
        <S><circle cx="12" cy="12" r="10.500" fill="#f4f4f4" stroke="#999" strokeWidth="2" /><path d="M7 7l4 3 6 7-6-4z" fill="#d24" /><path d="M17 17l-6-7 2 3z" fill="#5577b8" stroke="#5577b8" /></S>
      </div>
    </div>
  </div>
);

/* ---------- status ---------- */
const stSep = (x: number) => it(x, <div className="w-px h-[16px] bg-[#8e8c87]" />, 1);
const status: Item[] = [
  tx(77, 75, "Page 33 of 41"), stSep(199), tx(208, 172, "8,484 words, 49,747 characters"), stSep(449),
  tx(458, 72, "Default Style"), stSep(583), tx(616, 76, <span className="-tracking-[0.3px]">English (India)</span>), stSep(717),
  it(801, <div className="flex items-center gap-[1px]"><div className="w-[9px] h-[6px] bg-[#8d8b86]" /><div className="w-[3px] h-[9px] border-y border-r border-[#777]" /></div>, 14), stSep(814),
  it(830, <S w={12} h={12} vb="0 0 12 12"><path d="M7 1H1v10h6" fill="none" stroke="#777" /><text x="9" y="10" textAnchor="middle" fontSize="11" fontWeight="700" fill="#b3232a" fontFamily="DejaVu Sans">*</text></S>, 12), stSep(843), stSep(872),
  it(890, <S w={15} h={13} vb="0 0 15 13"><path d="M4 0v9M0 6h8" stroke="#1a3fd0" /><path d="M8 6h7M4 11h11M14 6v5M7 9v2" stroke="#555" strokeDasharray="1.500 1" /></S>, 15),
  tx(903, 66, "10.63 / 0.43"),
  it(999.5, <S w={14} h={14} vb="0 0 14 14"><rect x="3.500" y="3.500" width="8" height="8" fill="none" stroke="#333" strokeDasharray="1.500 1" /><path d="M0 7h3M0 10h3M9 0h3v3" stroke="#333" strokeDasharray="1.500 1" fill="none" /></S>, 14),
  tx(1014, 58, "1.22 x 0.61"), stSep(1098),
  it(1115, <S w={8} h={10} vb="0 0 8 10"><path d="M.5.500h4l3 3v6h-7z" fill="#fff" stroke="#333" /></S>, 8),
  it(1131, <S w={18} h={10} vb="0 0 18 10"><path d="M.5.500h4l3 3v6h-7zM10.500.500h4l3 3v6h-7z" fill="#fff" stroke="#999" /></S>, 18),
  it(1157, <S w={16} h={10} vb="0 0 16 10"><path d="M.5 2.500l3-2h4v9h-7zM8.500.500h4l3 2v7h-7z" fill="#fff" stroke="#999" /></S>, 16), stSep(1174),
  it(1189, <div className="w-[8px] h-[2px] bg-[#888]" />, 8),
  it(1247.5, <div className="w-[97px] h-[2px] bg-[#a5a3a0] relative"><div className="absolute left-[14px] -top-[4px] w-[2px] h-[10px] bg-[#a5a3a0]" /><div className="absolute left-[43px] -top-[3px] w-[8px] h-[8px] rounded-full bg-white border border-[#777]" /></div>, 97),
  it(1306, <div className="text-[#777] text-[16px] font-bold leading-none">+</div>, 10), stSep(1317),
  tx(1325, 32, "100%"),
];

export default function App() {
  return (
    <div className="w-[1366px] h-[768px] overflow-hidden flex flex-col bg-[#f1f0ee] font-['Noto_Sans','Open_Sans',sans-serif] relative">
      <Defs />
      <TopBar />
      <div className="flex-1 min-h-0 flex">
        <Dock />
        <div className="w-[1299px] shrink-0 flex flex-col min-h-0">
          <TitleArea />
          <div className="h-[2px] shrink-0 hidden" />
          <Bar className="h-[39px] shrink-0" items={row1} />
          <Bar className="h-[39px] shrink-0" items={row2} />
          <div className="flex-1 min-h-0 flex">
            <div className="w-[908px] shrink-0 flex flex-col min-h-0">
              <Ruler />
              <Doc />
            </div>
            <Sidebar />
          </div>
          <div className="border-b border-[#b9b7b2] shrink-0">
            <Bar className="h-[39px]" items={row3} />
          </div>
          <Bar className="h-[20px] shrink-0 text-[12px] text-[#4a4a4a] pt-[1px]" items={status} />
        </div>
      </div>
    </div>
  );
}
